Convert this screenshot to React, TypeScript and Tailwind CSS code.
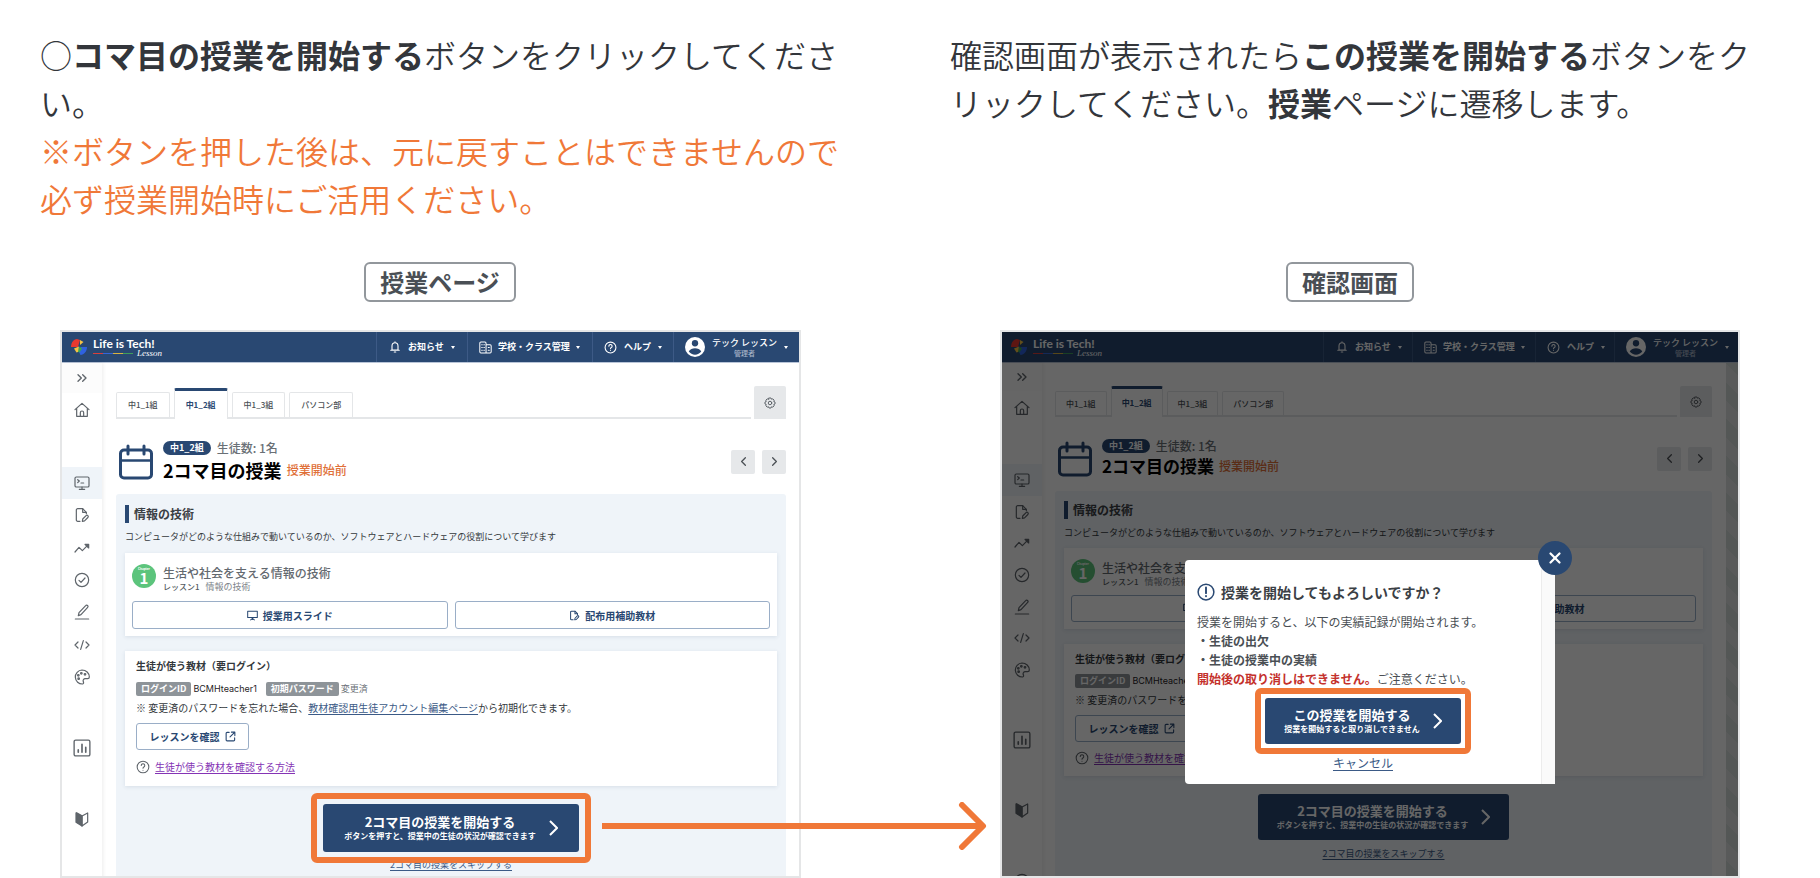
import React from 'react';
import { ChevronLeft, ChevronRight, ChevronsRight, X } from 'lucide-react';

type Size = 'large' | 'small';

const sizes = {
  large: {
    navNews: 'w-[91px]',
    navSchool: 'w-[125px]',
    navHelp: 'w-[81px]',
    navUser: 'w-[126px]',
    expand: 'h-[30px]',
    home: 'h-[34px]',
    menuGap: 'mt-10',
    menu: 'h-[226px]',
    chartGap: 'mt-[39px]',
    markGap: 'mt-[39px]',
    helpGap: 'mt-[43px]',
    main: 'pl-[14px] pr-[13px]',
    tabs: 'h-[33px]',
    tab: 'h-[25px] px-[11px]',
    activeTab: 'px-[11px]',
    title: 'mt-[22px]',
    titleGap: 'gap-[3px]',
    titleText: 'text-[18px]',
    panel: 'mt-3 pt-[11px]',
    cardTop: 'mt-[9px]',
    lesson: 'h-[30px]',
    materials: 'h-7',
    idRow: 'mt-[9px]',
    helpRow: 'mt-[10px]',
    cardBottom: 'pb-3',
    start: 'w-64 h-12',
    skip: 'mt-[7px]',
  },
  small: {
    navNews: 'w-[89px]',
    navSchool: 'w-[123px]',
    navHelp: 'w-[79px]',
    navUser: 'w-[124px]',
    expand: 'h-[28px]',
    home: 'h-[34px]',
    menuGap: 'mt-[39px]',
    menu: 'h-[222px]',
    chartGap: 'mt-[38px]',
    markGap: 'mt-[38px]',
    helpGap: 'mt-[39px]',
    main: 'pl-[13px] pr-[14px]',
    tabs: 'h-[31px]',
    tab: 'h-6 px-[10px]',
    activeTab: 'px-[10px]',
    title: 'mt-[22px]',
    titleGap: 'gap-[1px]',
    titleText: 'text-[17px]',
    panel: 'mt-[13px] pt-[10px]',
    cardTop: 'mt-2',
    lesson: 'h-[29px]',
    materials: 'h-[27px]',
    idRow: 'mt-2',
    helpRow: 'mt-[9px]',
    cardBottom: 'pb-[11px]',
    start: 'w-[251px] h-[46px]',
    skip: 'mt-2',
  },
};

interface IconProps {
  children: React.ReactNode;
  className?: string;
  width?: number;
}

function Icon({ children, className = 'size-4', width = 1.8 }: IconProps) {
  return (
    <svg
      viewBox="0 0 24 24"
      className={`${className} shrink-0`}
      fill="none"
      stroke="currentColor"
      strokeWidth={width}
      strokeLinecap="round"
      strokeLinejoin="round"
      aria-hidden="true"
    >
      {children}
    </svg>
  );
}

const DocEditPaths = () => (
  <>
    <path d="M9 21.5H5.5a2 2 0 0 1-2-2v-15a2 2 0 0 1 2-2H13l5.500 5.500V10" />
    <path d="M13 2.500V8h5.500" />
    <path d="M12.500 21.500l.6-3.500 5-5a1.600 1.600 0 0 1 2.700 2.700l-5 5z" />
  </>
);

const HelpPaths = () => (
  <>
    <circle cx="12" cy="12" r="10" />
    <path d="M9 9.500a3 3 0 1 1 4.500 2.600c-1 .6-1.500 1.100-1.500 2.200" />
    <path d="M12 17.400v.1" />
  </>
);

const menuIcons: { label: string; drawing: React.ReactNode }[] = [
  {
    label: '授業',
    drawing: (
      <>
        <rect x="1.500" y="3" width="21" height="15" rx="2" />
        <path d="M12 18v3.500M8 21.500h8M5.500 7l2.500 2-2.500 2.500M10.500 12h4" />
      </>
    ),
  },
  { label: '教材', drawing: <DocEditPaths /> },
  {
    label: '進捗',
    drawing: (
      <>
        <path d="M1.500 18l6-7 5 5L20 8.500" />
        <path d="M16.500 6.500H22V12z" fill="currentColor" />
      </>
    ),
  },
  {
    label: '提出',
    drawing: (
      <>
        <circle cx="12" cy="12" r="10" />
        <path d="M7.500 12.500l3 3L16.500 9" />
      </>
    ),
  },
  { label: '編集', drawing: <path d="M2 22.500h20M6.500 17.500l1-4.500L17.500 2.500a2 2 0 0 1 3 2.700L10.500 16z" /> },
  { label: 'コード', drawing: <path d="M6 7.500L1.500 12 6 16.500M18 7.500l4.500 4.500-4.500 4.500M14 5.500l-4 13" /> },
  {
    label: '作品',
    drawing: (
      <>
        <path d="M12 1.500a10.500 10.500 0 1 0 1 21c1.500-.5 1.700-1.900 1-3.200-1-2.300.2-4.800 3-4.800h3.500c1.500 0 2.500-1 2.500-2.500C23 6 18 1.500 12 1.500z" />
        <circle cx="7" cy="14.500" r="1.200" />
        <circle cx="6.500" cy="9.500" r="1.200" />
        <circle cx="11" cy="6.500" r="1.200" />
        <circle cx="16.500" cy="8" r="1.200" />
      </>
    ),
  },
];

function Caret() {
  return <span className="border-x-[2px] border-t-[3px] border-x-transparent border-t-white" />;
}

function Logo() {
  return (
    <div className="flex items-center gap-[6px] pl-[9px]">
      <svg viewBox="0 0 32 32" className="size-4" aria-hidden="true">
        <path d="M14 16H0C0 7 5 1 12 0l6 2z" fill="#e8392f" />
        <path d="M18 12V2l7 4z" fill="#f6c343" />
        <path d="M20 16h12c0 9-6 15-13 16l-3-6z" fill="#2f62e0" />
        <path d="M17 15l5 4-5 8-4-2z" fill="#3aa757" />
        <path d="M16 15L6 19l5 8 3-1z" fill="#f6c343" />
      </svg>
      <div className="flex flex-col">
        <span className="font-['Lato',sans-serif] text-[12px] font-bold leading-[13px]">Life is Tech!</span>
        <span className="flex h-[7px] items-center">
          <span className="h-px w-[10px] bg-[#d8403a]" />
          <span className="h-px w-[10px] bg-[#3566d8]" />
          <span className="h-px w-[10px] bg-[#d9b23f]" />
          <span className="h-px w-[10px] bg-[#3f9d5c]" />
          <span className="ml-1 font-['Liberation_Serif',serif] text-[9px] italic leading-[7px]">Lesson</span>
        </span>
      </div>
    </div>
  );
}

function Header({ size }: { size: Size }) {
  const s = sizes[size];
  const item = 'flex h-full items-center border-l border-[#3d5a86] font-bold';
  return (
    <header className="flex h-[31px] shrink-0 items-center justify-between border-b border-[#b9c5d8] bg-[#294872] text-[9px] text-white">
      <Logo />
      <nav className="flex h-full">
        <button type="button" className={`${item} ${s.navNews} gap-[7px] pl-3`}>
          <Icon className="size-3" width={2.2}>
            <path d="M12 3.500c-4 0-6 3-6 6.500V18h12v-8c0-3.500-2-6.500-6-6.500zM12 3.500V1.500M3.500 18.500h17M10.500 22h3" />
          </Icon>
          お知らせ
          <Caret />
        </button>
        <button type="button" className={`${item} ${s.navSchool} gap-[6px] pl-[11px]`}>
          <Icon className="size-[13px]" width={1.900}>
            <path d="M13 22H3.500a2 2 0 0 1-2-2V4a2 2 0 0 1 2-2H11a2 2 0 0 1 2 2zM13 7h7.500a2 2 0 0 1 2 2v11a2 2 0 0 1-2 2H13M5 7h1M9 7h1M5 12h1M9 12h1M5 17h1M9 17h1M17 12h2M17 17h2" />
          </Icon>
          学校・クラス管理
          <Caret />
        </button>
        <button type="button" className={`${item} ${s.navHelp} gap-[7px] pl-[11px]`}>
          <Icon className="size-[13px]" width={2}>
            <HelpPaths />
          </Icon>
          ヘルプ
          <Caret />
        </button>
        <button type="button" className={`${item} ${s.navUser} gap-[7px] pl-[11px]`}>
          <svg viewBox="0 0 24 24" className="size-5 shrink-0" aria-hidden="true">
            <circle cx="12" cy="12" r="12" fill="#fff" />
            <circle cx="12" cy="7.500" r="3.800" fill="#294872" />
            <path d="M4.500 17.500c1.500-3 4.500-4 7.500-4s6 1 7.500 4c-1.800 2.400-4.500 3.700-7.500 3.700s-5.700-1.300-7.500-3.700z" fill="#294872" />
          </svg>
          <span className="flex flex-col items-center whitespace-nowrap font-medium leading-[11px]">
            テック レッスン
            <span className="text-[7px] leading-[10px] text-[#a9b6c9]">管理者</span>
          </span>
          <Caret />
        </button>
      </nav>
    </header>
  );
}

function Sidebar({ size }: { size: Size }) {
  const s = sizes[size];
  return (
    <aside className="flex w-10 shrink-0 flex-col bg-white text-[#5f656b] shadow-[1px_0_4px_rgba(0,0,0,0.08)]">
      <div className={`${s.expand} flex items-center justify-center bg-[#fcfcfc]`}>
        <ChevronsRight className="size-4" strokeWidth={2} />
      </div>
      <div className={`${s.home} flex items-center justify-center`}>
        <Icon>
          <path d="M1.500 11.500L12 2l10.500 9.500M4 9.500v12h16v-12M9.500 21.500V16a2.500 2.500 0 0 1 5 0v5.500" />
        </Icon>
      </div>
      <ul className={`${s.menuGap} ${s.menu} flex flex-col`}>
        {menuIcons.map((item, index) => (
          <li
            key={item.label}
            className={`flex flex-1 items-center justify-center ${index === 0 ? 'bg-[#eff4f9]' : ''}`}
          >
            <Icon>{item.drawing}</Icon>
          </li>
        ))}
      </ul>
      <div className={`${s.chartGap} flex h-8 items-center justify-center`}>
        <Icon className="size-[18px]">
          <rect x="1.500" y="1.500" width="21" height="21" rx="2" />
          <path d="M7 14.500v3M12 7v10.500M17 11v6.500" strokeWidth="2.200" />
        </Icon>
      </div>
      <div className={`${s.markGap} flex h-8 items-center justify-center`}>
        <Icon>
          <path d="M12 7L4 2.500v14l8 6zM3 3v14l9 5.500V7.500z" fill="currentColor" />
          <path d="M12 7.500L20.500 3v13.500L12 22.500z" />
        </Icon>
      </div>
      <div className={`${s.helpGap} flex h-8 shrink-0 items-center justify-center`}>
        <Icon>
          <HelpPaths />
        </Icon>
      </div>
    </aside>
  );
}

function Tabs({ size }: { size: Size }) {
  const s = sizes[size];
  const tab = `${s.tab} rounded-t-[2px] border border-b-0 border-[#e4e6e8] bg-white`;
  return (
    <div className={`${s.tabs} mt-[23px] flex gap-[3px]`}>
      <div className="flex flex-1 items-end gap-1 border-b-2 border-[#e4e6e8] text-[8px] font-medium text-[#4a4f54]">
        <button type="button" className={tab}>中1_1組</button>
        <button
          type="button"
          className={`${s.activeTab} -mb-[2px] h-[31px] rounded-t-[2px] border-x border-t-[3px] border-x-[#e4e6e8] border-t-[#294872] bg-white font-bold text-[#294872]`}
        >
          中1_2組
        </button>
        <button type="button" className={tab}>中1_3組</button>
        <button type="button" className={tab}>パソコン部</button>
      </div>
      <button type="button" aria-label="設定" className="flex w-8 items-center justify-center rounded-t-[2px] bg-[#e6e8ea] text-[#5f656b]">
        <Icon className="size-3" width={2}>
          <path d="M10 2h4l1 2.500 2.600-.8 2.700 2.700-.8 2.600L22 10v4l-2.500 1 .8 2.600-2.700 2.700-2.600-.8L14 22h-4l-1-2.500-2.600.8-2.700-2.700.8-2.600L2 14v-4l2.500-1-.8-2.600 2.700-2.700 2.600.8z" />
          <circle cx="12" cy="12" r="3.500" />
        </Icon>
      </button>
    </div>
  );
}

function LessonTitle({ size }: { size: Size }) {
  const s = sizes[size];
  const pager = 'flex size-6 items-center justify-center rounded-[2px] bg-[#e6e8ea] text-[#4a4f54]';
  return (
    <div className={`${s.title} flex items-center`}>
      <svg viewBox="0 0 36 36" className="ml-[2px] size-9 shrink-0 text-[#294872]" fill="none" stroke="currentColor" strokeWidth="3" strokeLinecap="round" aria-hidden="true">
        <rect x="2.500" y="6" width="31" height="28" rx="3.500" />
        <path d="M10 2v8M26 2v8" />
        <path d="M3 16.500h30" strokeWidth="2.500" />
      </svg>
      <div className={`${s.titleGap} ml-[9px] flex flex-1 flex-col`}>
        <div className="flex h-[14px] items-center gap-[6px]">
          <span className="rounded-full bg-[#294872] px-[7px] text-[9px] font-bold leading-[14px] text-white">中1_2組</span>
          <span className="text-[12px] leading-[14px] font-medium text-[#6a7076]">生徒数: 1名</span>
        </div>
        <div className="flex h-6 items-center gap-[5px]">
          <h2 className={`${s.titleText} font-bold leading-6 text-black`}>2コマ目の授業</h2>
          <span className="text-[12px] font-medium leading-6 text-[#e07038]">授業開始前</span>
        </div>
      </div>
      <div className="flex gap-[7px]">
        <button type="button" aria-label="前の授業" className={pager}>
          <ChevronLeft className="size-[15px]" strokeWidth={2} />
        </button>
        <button type="button" aria-label="次の授業" className={pager}>
          <ChevronRight className="size-[15px]" strokeWidth={2} />
        </button>
      </div>
    </div>
  );
}

function LessonCard({ size }: { size: Size }) {
  const s = sizes[size];
  const material = `${s.materials} flex flex-1 items-center justify-center gap-[5px] rounded-[3px] border border-[#9aaec7] text-[10px] font-bold text-[#294872]`;
  return (
    <section className={`${s.cardTop} bg-white px-[7px] pt-[11px] pb-[7px] shadow-[0_1px_4px_rgba(40,70,110,0.12)]`}>
      <div className={`${s.lesson} flex gap-[7px]`}>
        <div className="flex size-6 flex-col items-center rounded-full bg-[#5cc47c] text-white">
          <span className="pt-[3px] text-[3px] font-bold leading-[4px]">Chapter</span>
          <span className="text-[15px] font-bold leading-[14px]">1</span>
        </div>
        <div className="pt-[2px]">
          <h4 className="text-[12px] font-medium leading-[14px] text-[#63696f]">生活や社会を支える情報の技術</h4>
          <p className="flex gap-[6px] text-[9px] leading-[14px] text-[#7d8389]">
            <span className="text-[8px] font-medium text-[#555b61]">レッスン1</span>
            情報の技術
          </p>
        </div>
      </div>
      <div className="mt-[7px] flex gap-[7px]">
        <button type="button" className={material}>
          <Icon className="size-[11px]" width={2.200}>
            <path d="M1.500 2.500h21v14h-21zM12 16.500v4M8 21.500l4-3 4 3" />
          </Icon>
          授業用スライド
        </button>
        <button type="button" className={material}>
          <Icon className="size-[11px]" width={2.200}>
            <DocEditPaths />
          </Icon>
          配布用補助教材
        </button>
      </div>
    </section>
  );
}

function MaterialCard({ size }: { size: Size }) {
  const s = sizes[size];
  const tag = 'rounded-[2px] bg-[#8e9499] px-[5px] font-bold text-white';
  return (
    <section className={`${s.cardBottom} mt-[15px] bg-white px-[11px] pt-2 text-[10px] leading-[14px] text-[#33383c] shadow-[0_1px_4px_rgba(40,70,110,0.12)]`}>
      <h4 className="font-bold">生徒が使う教材（要ログイン）</h4>
      <div className={`${s.idRow} flex gap-[2px] text-[9px]`}>
        <span className={tag}>ログインID</span>
        <span className="mr-[7px] font-['Inter',sans-serif] text-[#1f2326]">BCMHteacher1</span>
        <span className={tag}>初期パスワード</span>
        <span className="text-[#6a7076]">変更済</span>
      </div>
      <p className="mt-[5px]">
        ※ 変更済のパスワードを忘れた場合、
        <a href="#account" className="text-[#3b5a86] underline underline-offset-2">教材確認用生徒アカウント編集ページ</a>
        から初期化できます。
      </p>
      <button type="button" className="mt-2 flex h-[27px] w-[113px] items-center justify-center gap-[5px] rounded-[3px] border border-[#9aaec7] font-bold text-[#294872]">
        レッスンを確認
        <Icon className="size-[11px]" width={2.400}>
          <path d="M9 3H4.500a2 2 0 0 0-2 2v14.500a2 2 0 0 0 2 2H19a2 2 0 0 0 2-2V15M14 2.500h7.500V10M21.500 2.500L11 13" />
        </Icon>
      </button>
      <div className={`${s.helpRow} flex items-center gap-[5px]`}>
        <Icon className="size-[14px] text-[#5f656b]">
          <HelpPaths />
        </Icon>
        <a href="#help" className="text-[#8534b5] underline underline-offset-2">生徒が使う教材を確認する方法</a>
      </div>
    </section>
  );
}

interface StartButtonProps {
  title: string;
  note: string;
  className: string;
  highlight?: string;
}

function StartButton({ title, note, className, highlight }: StartButtonProps) {
  return (
    <div className="relative">
      <button type="button" className={`${className} flex items-center justify-center gap-[13px] rounded-[3px] bg-[#294872] text-white`}>
        <span className="flex flex-col items-center font-bold">
          <span className="text-[13px] leading-4">{title}</span>
          <span className="text-[8px] leading-3">{note}</span>
        </span>
        <svg viewBox="0 0 9 16" className="h-4 w-[9px]" fill="none" stroke="currentColor" strokeWidth="2" aria-hidden="true">
          <path d="M1 1l7 7-7 7" />
        </svg>
      </button>
      {highlight && <div className={`${highlight} pointer-events-none absolute rounded-md border-[6px] border-[#f07838]`} />}
    </div>
  );
}

function LessonScreen({ size }: { size: Size }) {
  const s = sizes[size];
  return (
    <div className="flex h-full flex-col bg-white">
      <Header size={size} />
      <div className="flex flex-1">
        <Sidebar size={size} />
        <main className={`${s.main} flex flex-1 flex-col`}>
          <Tabs size={size} />
          <LessonTitle size={size} />
          <div className={`${s.panel} flex flex-1 flex-col rounded-t-[3px] bg-[#eff4f9] px-[9px]`}>
            <h3 className="border-l-4 border-[#294872] pl-[5px] text-[12px] font-bold leading-[18px] text-[#3b4045]">情報の技術</h3>
            <p className="mt-[7px] text-[9px] leading-[14px] text-[#33383c]">
              コンピュータがどのような仕組みで動いているのか、ソフトウェアとハードウェアの役割について学びます
            </p>
            <LessonCard size={size} />
            <MaterialCard size={size} />
            <div className="mt-[18px] flex flex-col items-center">
              <StartButton
                title="2コマ目の授業を開始する"
                note="ボタンを押すと、授業中の生徒の状況が確認できます"
                className={s.start}
                highlight={size === 'large' ? '-inset-x-3 -inset-y-[11px]' : undefined}
              />
              <a href="#skip" className={`${s.skip} text-[9px] leading-3 text-[#3b5a86] underline underline-offset-2`}>
                2コマ目の授業をスキップする
              </a>
            </div>
          </div>
        </main>
        {size === 'small' && (
          <div className="w-3 bg-[repeating-linear-gradient(45deg,#dfe1e1_0px,#dfe1e1_13px,#d2dad6_13px,#d2dad6_26px)]" />
        )}
      </div>
    </div>
  );
}

function ConfirmDialog() {
  return (
    <div className="absolute top-[228px] left-[183px] flex w-[370px] rounded-l bg-white" role="dialog" aria-labelledby="confirm-title">
      <div className="flex-1 px-3 pt-[22px] pb-3 text-[12px] leading-[19px] text-[#4a4f54]">
        <h2 id="confirm-title" className="flex items-center gap-[6px] text-[14px] font-bold leading-5 text-[#3b4045]">
          <Icon className="size-[18px] text-[#294872]" width={2}>
            <circle cx="12" cy="12" r="10.500" />
            <path d="M12 6v7.500M12 17.400v.2" strokeWidth="2.500" />
          </Icon>
          授業を開始してもよろしいですか？
        </h2>
        <p className="mt-[10px]">授業を開始すると、以下の実績記録が開始されます。</p>
        <ul className="font-bold">
          <li>・生徒の出欠</li>
          <li>・生徒の授業中の実績</li>
        </ul>
        <p>
          <strong className="text-[#c4302b]">開始後の取り消しはできません。</strong>
          ご注意ください。
        </p>
        <div className="mt-[10px] flex flex-col items-center">
          <StartButton
            title="この授業を開始する"
            note="授業を開始すると取り消しできません"
            className="h-[46px] w-[196px]"
            highlight="-inset-[10px]"
          />
          <button type="button" className="mt-[9px] text-[#3b5a86] underline underline-offset-2">キャンセル</button>
        </div>
      </div>
      <div className="w-[14px] border-l border-[#ececec] bg-[#fafafa]" />
      <button
        type="button"
        aria-label="閉じる"
        className="absolute -top-[19px] -right-[17px] flex size-[34px] items-center justify-center rounded-full bg-[#294872] text-white"
      >
        <X className="size-[18px]" strokeWidth={3} />
      </button>
    </div>
  );
}

function StepLabel({ children }: { children: React.ReactNode }) {
  return (
    <div className="mt-[38px] mb-7 flex justify-center pl-10 pr-[70px]">
      <span className="rounded-md border-2 border-[#92979c] px-[14px] text-[24px] font-bold leading-9 text-[#4a4f55]">{children}</span>
    </div>
  );
}

export default function App() {
  const lead = 'h-[194px] pl-10 pr-[68px] text-[32px] font-[350] leading-[48px] text-[#33363b]';
  return (
    <div className="grid grid-cols-2 bg-white pt-[30px] font-['Noto_Sans_CJK_JP',sans-serif]">
      <section>
        <p className={lead}>
          ○<strong className="font-bold">コマ目の授業を開始する</strong>ボタンをクリックしてください。
          <br />
          <span className="text-[#f07838]">※ボタンを押した後は、元に戻すことはできませんので必ず授業開始時にご活用ください。</span>
        </p>
        <StepLabel>授業ページ</StepLabel>
        <div className="relative ml-[60px] mr-[109px]">
          <div className="h-[548px] overflow-hidden border-2 border-[#e5e6e7]">
            <LessonScreen size="large" />
          </div>
          <svg viewBox="0 0 386 48" className="absolute top-[472px] left-[542px] z-10 h-12 w-[386px]" fill="none" stroke="#f07838" strokeWidth="6" aria-hidden="true">
            <path d="M0 24h380" />
            <path d="M360 3l21 21-21 21" strokeLinecap="round" strokeLinejoin="round" />
          </svg>
        </div>
      </section>
      <section>
        <p className={lead}>
          確認画面が表示されたら<strong className="font-bold">この授業を開始する</strong>ボタンをクリックしてください。<strong className="font-bold">授業</strong>ページに遷移します。
        </p>
        <StepLabel>確認画面</StepLabel>
        <div className="relative ml-[90px] mr-20 h-[548px] overflow-hidden border-2 border-[#e5e6e7]">
          <LessonScreen size="small" />
          <div className="absolute inset-0 bg-black/60" />
          <ConfirmDialog />
        </div>
      </section>
    </div>
  );
}
